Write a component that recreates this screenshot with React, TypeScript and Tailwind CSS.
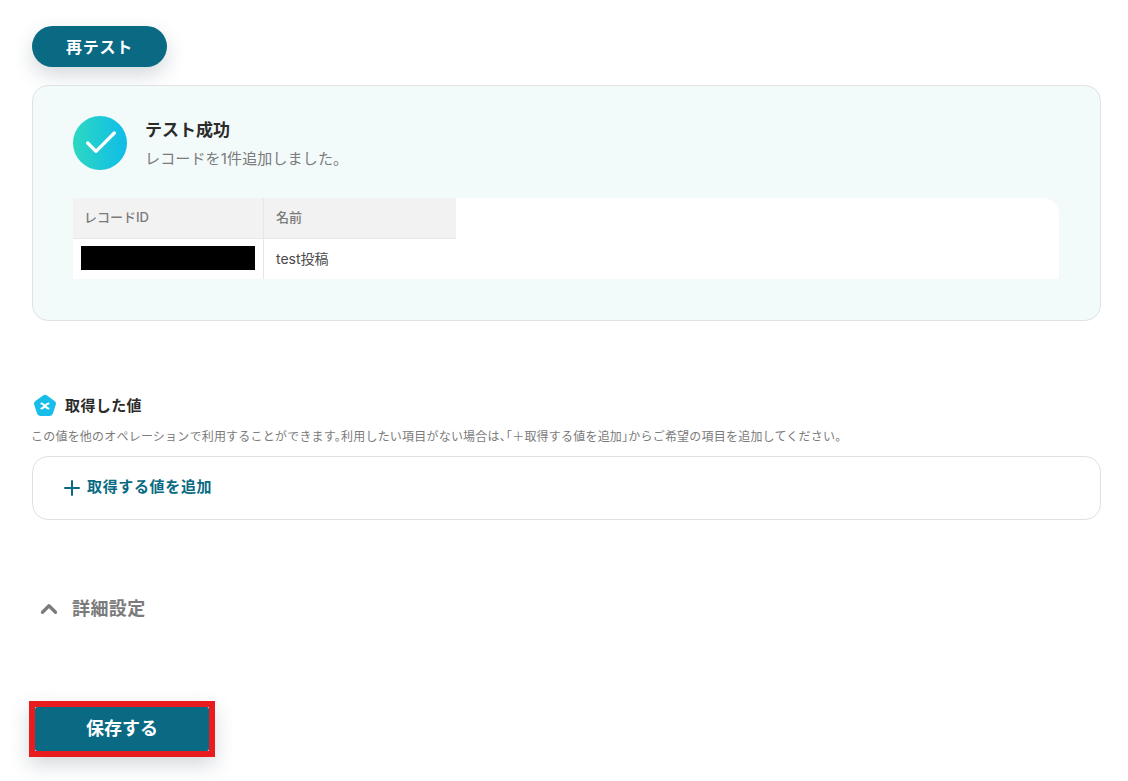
import { Check, ChevronUp, Plus } from "lucide-react";

const font = "font-['Inter','Noto_Sans_CJK_JP',sans-serif]";

export default function App() {
  return (
    <div className={`${font} h-[781px] overflow-hidden bg-white px-8 pt-[26px] text-[#2b2b2b]`}>
      <button className="flex h-[41px] w-[135px] items-center justify-center rounded-full bg-[#0a6a83] text-[16px] tracking-[0.75px] font-bold text-white shadow-[0_8px_20px_rgba(40,60,80,0.2)]">
        再テスト
      </button>

      <div className="mt-[18px] h-[236px] w-[1069px] rounded-2xl border border-[#dfe3e5] bg-[#f2fafa] px-10 pt-[30px]">
        <div className="flex gap-[18px]">
          <div className="flex h-[54px] w-[54px] items-center justify-center rounded-full bg-gradient-to-r from-[#2dd8c0] to-[#10bce8]">
            <Check className="ml-[2px] h-10 w-10 text-white" strokeWidth={2} />
          </div>
          <div>
            <div className="text-[17px] leading-[28px] font-semibold">テスト成功</div>
            <div className="mt-[2px] text-[15px] leading-[26px] tracking-[0.15px] text-[#7b7b7b]">レコードを1件追加しました。</div>
          </div>
        </div>

        <div className="mt-[26px] h-[81px] w-[986px] rounded-tr-2xl bg-white">
          <div className="flex h-[41px] w-[383px] border-b border-[#e6e6e6] bg-[#f2f2f2] text-[13px] font-medium text-[#7b7b7b]">
            <div className="flex w-[191px] items-center border-r border-[#e6e6e6] px-[11px]">レコードID</div>
            <div className="flex items-center px-3">名前</div>
          </div>
          <div className="flex h-10 text-[14px] text-[#4a4a4a]">
            <div className="flex w-[191px] items-center border-r border-[#e6e6e6] px-2 pb-[2px]">
              <div className="h-6 w-[174px] bg-black" />
            </div>
            <div className="flex items-center px-3 pb-[2px]">test投稿</div>
          </div>
        </div>
      </div>

      <div className="mt-[73px] flex h-6 items-center">
        <svg viewBox="0 0 24 24" className="ml-[1px] h-[24px] w-[24px]">
          <path
            d="M10 1.4a3.4 3.4 0 0 1 4 0l7.6 5.5a3.4 3.4 0 0 1 1.2 3.8l-2.9 8.9a3.4 3.4 0 0 1-3.2 2.4H7.300a3.400 3.400 0 0 1-3.200-2.400L1.200 10.700a3.400 3.400 0 0 1 1.200-3.800Z"
            fill="#18bdea"
          />
          <path d="M8.500 9.500c2.500 0 4.500 5 7 5M15.500 9.500c-2.500 0-4.500 5-7 5" stroke="#fff" strokeWidth={2.200} strokeLinecap="round" fill="none" />
        </svg>
        <span className="ml-2 text-[15px] tracking-[0.4px] font-semibold">取得した値</span>
      </div>
      <p className="mt-[11px] -ml-[1px] text-[12px] leading-4 tracking-[0.21px] whitespace-nowrap text-[#7b7b7b] [font-feature-settings:'halt']">
        この値を他のオペレーションで利用することができます。利用したい項目がない場合は、「＋取得する値を追加」からご希望の項目を追加してください。
      </p>
      <div className="mt-[11px] flex h-16 w-[1069px] items-center rounded-2xl border border-[#e0e0e0] px-[27px] text-[15px] tracking-[0.65px] font-semibold text-[#0a6a83]">
        <Plus className="h-6 w-6" strokeWidth={2} />
        <span className="ml-[3px] pb-[2px]">取得する値を追加</span>
      </div>

      <div className="mt-[76px] flex items-center text-[#7b7b7b]">
        <ChevronUp className="ml-[4px] h-[26px] w-[26px]" strokeWidth={3} />
        <span className="ml-[10px] text-[18px] leading-[26px] tracking-[0.4px] font-semibold">詳細設定</span>
      </div>

      <div className="mt-[79px] -ml-[3px] w-[186px] border-[6px] border-[#e81c1f] bg-white shadow-[0_8px_20px_rgba(40,60,80,0.2)]">
        <button className="flex h-11 w-full items-center justify-center rounded-[2px] bg-[#0a6a83] pb-[2px] text-[18px] font-bold text-white">
          保存する
        </button>
      </div>
    </div>
  );
}
